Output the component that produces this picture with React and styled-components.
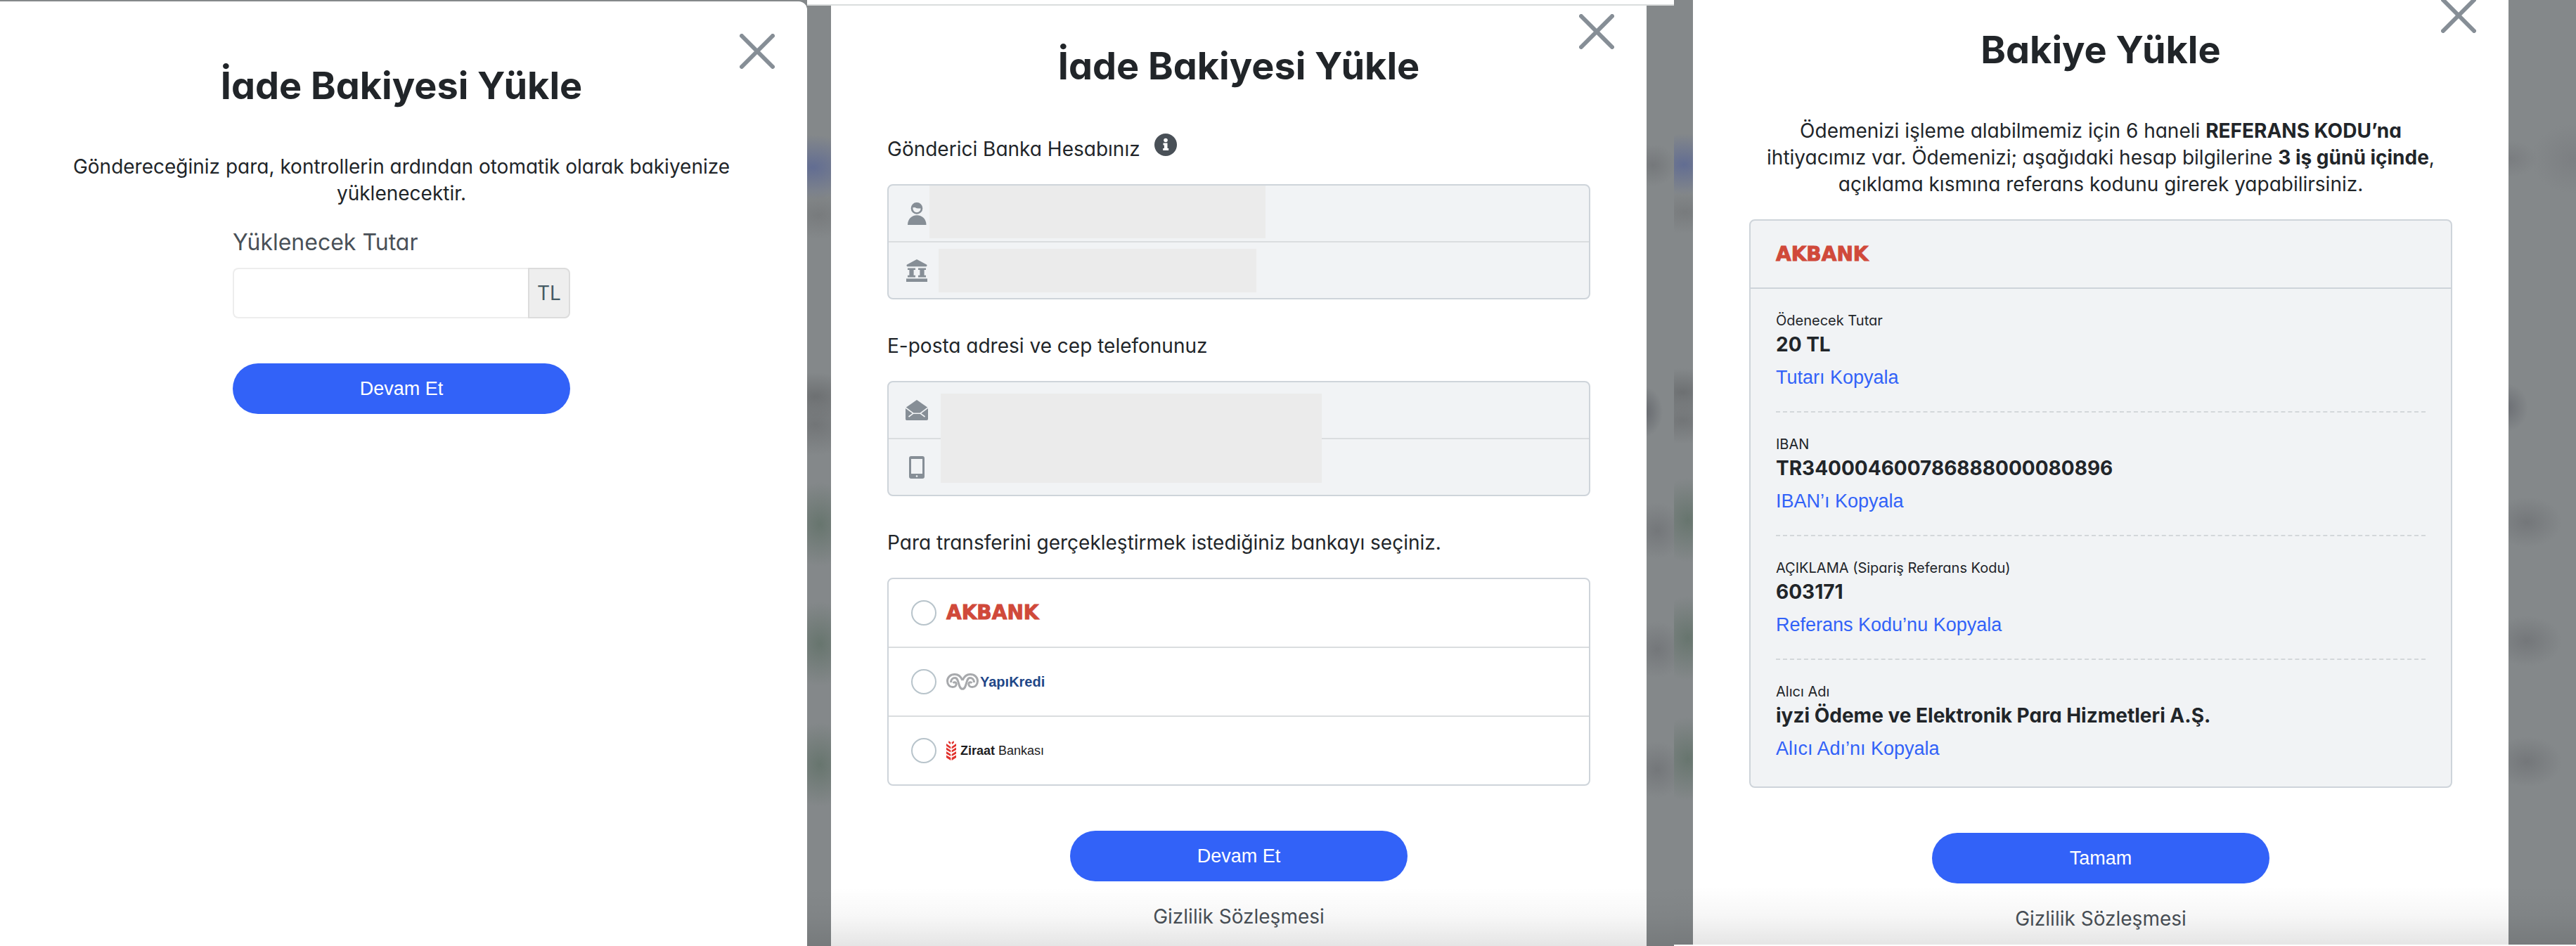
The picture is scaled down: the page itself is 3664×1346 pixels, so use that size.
import { useState } from "react"
import styled, { createGlobalStyle } from "styled-components"


const blot = (color, x, y, rx, ry) =>
    `radial-gradient(ellipse ${rx}px ${ry}px at ${x} ${y}px, ${color}, transparent)`

// blurred page behind the dialogs
const middleBackdrop = [
    blot("#626d92", "8px", 238, 70, 46),
    blot("#787b7d", "16px", 306, 50, 34),
    blot("#6d7072", "12px", 564, 60, 34),
    blot("#727577", "12px", 604, 60, 44),
    blot("#67756e", "18px", 746, 50, 60),
    blot("#67756e", "18px", 916, 50, 60),
    blot("#67756e", "18px", 1088, 50, 60),
    blot("#75787b", "calc(100% - 30px)", 235, 34, 30),
    blot("#66696e", "calc(100% - 42px)", 586, 26, 36),
    blot("#74777a", "calc(100% - 24px)", 755, 40, 40),
    blot("#74777a", "calc(100% - 24px)", 924, 40, 40),
    blot("#74777a", "calc(100% - 24px)", 1095, 40, 40),
].join(",")

const rightBackdrop = [
    blot("#626d92", "14px", 234, 60, 44),
    blot("#787b7d", "16px", 302, 50, 30),
    blot("#6d7072", "12px", 558, 60, 34),
    blot("#727577", "12px", 598, 60, 34),
    blot("#67756e", "20px", 740, 50, 60),
    blot("#67756e", "20px", 908, 50, 60),
    blot("#67756e", "20px", 1080, 50, 60),
    blot("#7a7d80", "calc(100% - 94px)", 226, 40, 26),
    blot("#7c7f82", "calc(100% - 4px)", 226, 60, 50),
    blot("#6c6f74", "calc(100% - 98px)", 580, 30, 34),
    blot("#74777a", "calc(100% - 70px)", 743, 50, 36),
    blot("#74777a", "calc(100% - 70px)", 912, 50, 36),
    blot("#74777a", "calc(100% - 70px)", 1084, 50, 36),
].join(",")


const CloseIcon = () => (
    <svg width="50" height="50" viewBox="0 0 50 50" fill="none" stroke="#868e96" strokeWidth="6" strokeLinecap="round" aria-hidden="true">
        <path d="M3 3L47 47M47 3L3 47" />
    </svg>
)

const InfoIcon = () => (
    <svg width="32" height="32" viewBox="0 0 32 32" aria-hidden="true">
        <circle cx="16" cy="16" r="16" fill="#495057" />
        <circle cx="16" cy="9.500" r="2.800" fill="#fff" />
        <path fill="#fff" d="M12.500 13.500h6v7.500h1.700v3h-8v-3h1.700v-4.500h-1.400z" />
    </svg>
)

const PersonIcon = () => (
    <svg width="32" height="32" viewBox="0 0 32 32" fill="#868e96" aria-hidden="true">
        <path fillRule="evenodd" d="M16 0a8.300 8.300 0 0 1 8.300 8.400A8.300 8.300 0 0 1 16 16.800a8.300 8.300 0 0 1-8.300-8.400A8.300 8.300 0 0 1 16 0zm-5.600 7.200c-.4 4 2.400 7 5.600 7s5.800-2.600 5.600-5.800c-4 .4-6.600-.3-8.200-1.500-.8.500-1.900.6-3 .3z" />
        <path d="M3 32c0-8 5.600-13.700 13.200-13.700S29.500 24 29.500 32z" />
    </svg>
)

const BankIcon = () => (
    <svg width="32" height="32" viewBox="0 0 32 32" fill="#868e96" aria-hidden="true">
        <path d="M16 0l14 7.600c1 .6.600 2.600-.6 2.600H2.600C1.400 10.200 1 8.200 2 7.600z" />
        <path d="M3 12.600h11v2.400h-2.400v7.800H14v2.600H3v-2.600h2.400V15H3zM18 12.600h11v2.400h-2.400v7.800H29v2.600H18v-2.600h2.400V15H18z" />
        <path d="M1 27.400h30V32H1z" />
    </svg>
)

const MailIcon = () => (
    <svg width="32" height="32" viewBox="0 0 32 32" aria-hidden="true">
        <path fill="#868e96" d="M16 1L1 11.500c-.7.500-1 1-1 2V28c0 1.400.8 2 2 2h28c1.200 0 2-.8 2-2V13.500c0-1-.3-1.500-1-2z" />
        <path fill="none" stroke="#f1f3f5" strokeWidth="1.600" d="M0 12l11 8.200h10L32 12M4.500 25l6.500-4.800M27.500 25L21 20.200" />
    </svg>
)

const PhoneIcon = () => (
    <svg width="32" height="32" viewBox="0 0 32 32" aria-hidden="true">
        <path fill="#868e96" fillRule="evenodd" d="M8 0h16a3 3 0 0 1 3 3v26a3 3 0 0 1-3 3H8a3 3 0 0 1-3-3V3a3 3 0 0 1 3-3zm0 4v21h16V4z" />
        <circle cx="16" cy="28.500" r="1.300" fill="#f1f3f5" />
    </svg>
)

const RamIcon = () => (
    <svg width="46" height="24" viewBox="0 0 46 24" fill="none" stroke="#a7a9ac" strokeWidth="3" aria-hidden="true">
        <path d="M23 10C20.500 4 17 1.500 12 1.500C5.500 1.500 1.500 5.800 1.500 11C1.500 16 5 19.600 9 19.600C12.500 19.600 14.500 17.500 14.200 14.800C13.900 12.400 11 12 9.500 13.800" />
        <path d="M6.500 13C6.500 9 9 6.500 12.500 6.500C18.500 6.500 16.500 22.300 23 22.300C29.500 22.300 27.500 6.500 33.500 6.500C37 6.500 39.500 9 39.500 13" />
        <path d="M23 10C25.500 4 29 1.500 34 1.500C40.500 1.500 44.500 5.800 44.500 11C44.500 16 41 19.600 37 19.600C33.500 19.600 31.500 17.500 31.800 14.800C32.100 12.400 35 12 36.500 13.800" />
    </svg>
)

const WheatIcon = () => (
    <svg width="14" height="28" viewBox="0 0 14 28" fill="#e1322d" aria-hidden="true">
        <path d="M3.500 0l3 2.500L5.800 5 3 2.800zM10.500 0l-3 2.500.7 2.500L11 2.800z" />
        <path d="M0 4l6.300 4.500v3L0 7.500zM14 4l-6.300 4.500v3L14 7.500z" />
        <path d="M0 9.500l6.300 4v3L0 13zM14 9.500l-6.300 4v3L14 13z" />
        <path d="M0 15l6.300 4v3L0 18.500zM14 15l-6.300 4v3l6.300-3.500z" />
        <path d="M0 20.500l6.300 3.500v4L0 24zM14 20.500l-6.300 3.500v4L14 24z" />
    </svg>
)


const AkbankLogo = () => <Akbank>AKBANK</Akbank>

const YapiKrediLogo = () => (
    <>
        <RamIcon />
        <YapiKredi>YapıKredi</YapiKredi>
    </>
)

const ZiraatLogo = () => (
    <>
        <WheatIcon />
        <Ziraat><b>Ziraat</b> Bankası</Ziraat>
    </>
)

const banks = [
    { id: "akbank", Logo: AkbankLogo },
    { id: "yapikredi", Logo: YapiKrediLogo },
    { id: "ziraat", Logo: ZiraatLogo },
]

const details = [
    { label: "Ödenecek Tutar", value: "20 TL", copy: "Tutarı Kopyala" },
    { label: "IBAN", value: "TR340004600786888000080896", copy: "IBAN’ı Kopyala" },
    { label: "AÇIKLAMA (Sipariş Referans Kodu)", value: "603171", copy: "Referans Kodu’nu Kopyala" },
    { label: "Alıcı Adı", value: "iyzi Ödeme ve Elektronik Para Hizmetleri A.Ş.", copy: "Alıcı Adı’nı Kopyala" },
]


const Close = () => (
    <CloseButton type="button" aria-label="Kapat"><CloseIcon /></CloseButton>
)

const AmountDialog = () => {
    const [amount, setAmount] = useState("")

    return (
        <Dialog $shift={2} $rounded>
            <Close />
            <Title>İade Bakiyesi Yükle</Title>
            <Lead>Göndereceğiniz para, kontrollerin ardından otomatik olarak bakiyenize yüklenecektir.</Lead>
            <AmountForm>
                <AmountLabel htmlFor="amount">Yüklenecek Tutar</AmountLabel>
                <AmountGroup>
                    <AmountInput id="amount" value={amount} onChange={(e) => setAmount(e.target.value)} />
                    <Currency>TL</Currency>
                </AmountGroup>
            </AmountForm>
            <PrimaryButton type="button">Devam Et</PrimaryButton>
        </Dialog>
    )
}

const BankDialog = () => {
    const [bank, setBank] = useState(null)

    return (
        <Dialog $shift={-34}>
            <Close />
            <Title>İade Bakiyesi Yükle</Title>
            <Column>
                <SectionTitle>Gönderici Banka Hesabınız <Hint><InfoIcon /></Hint></SectionTitle>
                <InfoBox>
                    <InfoRow><PersonIcon /><Hidden $start={2} $width={478} $height={75} $top /></InfoRow>
                    <InfoRow><BankIcon /><Hidden $start={15} $width={452} $height={62} /></InfoRow>
                </InfoBox>
                <SectionTitle>E-posta adresi ve cep telefonunuz</SectionTitle>
                <InfoBox>
                    <InfoRow><MailIcon /></InfoRow>
                    <InfoRow><PhoneIcon /></InfoRow>
                    <HiddenOver />
                </InfoBox>
                <SectionTitle>Para transferini gerçekleştirmek istediğiniz bankayı seçiniz.</SectionTitle>
                <BankList>
                    {banks.map(({ id, Logo }) => (
                        <BankOption key={id}>
                            <Radio name="bank" value={id} checked={bank === id} onChange={() => setBank(id)} />
                            <LogoBox><Logo /></LogoBox>
                        </BankOption>
                    ))}
                </BankList>
            </Column>
            <PrimaryButton type="button">Devam Et</PrimaryButton>
            <PrivacyLink href="#gizlilik">Gizlilik Sözleşmesi</PrivacyLink>
        </Dialog>
    )
}

const TransferDialog = () => (
    <Dialog $shift={-49}>
        <Close />
        <Title>Bakiye Yükle</Title>
        <Lead>
            Ödemenizi işleme alabilmemiz için 6 haneli <b>REFERANS KODU’na</b> ihtiyacımız var. Ödemenizi; aşağıdaki hesap bilgilerine <b>3 iş günü içinde</b>, açıklama kısmına referans kodunu girerek yapabilirsiniz.
        </Lead>
        <Card>
            <CardHeader><AkbankLogo /></CardHeader>
            <CardBody>
                {details.map((item) => (
                    <Detail key={item.label}>
                        <DetailLabel>{item.label}</DetailLabel>
                        <DetailValue>{item.value}</DetailValue>
                        <CopyButton type="button" onClick={() => navigator.clipboard?.writeText(item.value)}>{item.copy}</CopyButton>
                    </Detail>
                ))}
            </CardBody>
        </Card>
        <PrimaryButton type="button">Tamam</PrimaryButton>
        <PrivacyLink href="#gizlilik">Gizlilik Sözleşmesi</PrivacyLink>
    </Dialog>
)

const App = () => {
    return (
        <Page>
            <GlobalStyle />
            <Frame>
                <AmountDialog />
            </Frame>
            <Frame $backdrop={middleBackdrop} $left={34} $right={39} $faded>
                <BrowserEdge />
                <BankDialog />
            </Frame>
            <Frame $backdrop={rightBackdrop} $left={27} $right={96} $bottom={2} $faded>
                <TransferDialog />
            </Frame>
        </Page>
    )
}

export default App


const GlobalStyle = createGlobalStyle`
  * {
    box-sizing: border-box;
  }
  body {
    margin: 0;
    background: #fff;
    color: #212529;
    font-family: Inter, "Open Sans", sans-serif;
    font-feature-settings: "cv11";
    font-size: 28px;
    line-height: 36px;
  }
`

const Page = styled.main`
  display: grid;
  grid-template-columns: 1148fr 1233fr 1283fr;
  min-height: 100vh;
`

const Frame = styled.section`
  position: relative;
  display: flex;
  flex-direction: column;
  overflow: hidden;
  margin-bottom: ${({ $bottom = 0 }) => $bottom}px;
  padding: 0 ${({ $right = 0 }) => $right}px 0 ${({ $left = 0 }) => $left}px;
  background-color: #84888a;
  background-image: ${({ $backdrop = "none" }) => $backdrop};

  &::after {
    content: "";
    display: ${({ $faded }) => ($faded ? "block" : "none")};
    position: absolute;
    inset: auto 0 0 0;
    height: 84px;
    background: linear-gradient(transparent, rgba(0, 0, 0, 0.03) 50%, rgba(0, 0, 0, 0.1));
    pointer-events: none;
  }
`

const BrowserEdge = styled.div`
  position: relative;
  z-index: 1;
  flex: none;
  height: 8px;
  margin: 0 -39px 0 -34px;
  border-bottom: 2px solid #dadddd;
  background: #fff;
`

const Dialog = styled.div`
  position: relative;
  display: flex;
  flex-direction: column;
  align-items: center;
  flex: 1;
  margin-top: ${({ $shift }) => $shift}px;
  padding: 86px ${({ $rounded }) => ($rounded ? 86 : 80)}px 4px 80px;
  background: #fff;
  border-top-right-radius: ${({ $rounded }) => ($rounded ? "12px" : "0")};
`

const CloseButton = styled.button`
  position: absolute;
  top: 46px;
  right: 46px;
  display: flex;
  padding: 0;
  border: 0;
  background: none;
  cursor: pointer;
`

const Title = styled.h1`
  margin: 0 0 62px;
  font-size: 54px;
  font-weight: 700;
  line-height: 68px;
`

const Lead = styled.p`
  max-width: 1000px;
  margin: 0 0 31px;
  line-height: 38px;
  text-align: center;
`

const AmountForm = styled.div`
  display: flex;
  flex-direction: column;
  gap: 16px;
  width: 480px;
`

const AmountLabel = styled.label`
  color: #495057;
  font-size: 32px;
  line-height: 40px;
`

const AmountGroup = styled.div`
  display: flex;
  height: 72px;
`

const AmountInput = styled.input`
  flex: 1;
  min-width: 0;
  padding: 0 20px;
  border: 2px solid #ededed;
  border-right: 0;
  border-radius: 8px 0 0 8px;
  background: #fff;
  font: inherit;
`

const Currency = styled.span`
  display: flex;
  align-items: center;
  justify-content: center;
  width: 60px;
  border: 2px solid #dcdcdc;
  border-radius: 0 8px 8px 0;
  background: #eee;
  color: #455a64;
`

const PrimaryButton = styled.button`
  flex: none;
  width: 480px;
  height: 72px;
  margin-top: 64px;
  border: 0;
  border-radius: 36px;
  background: #3262f8;
  color: #fff;
  font-family: "Liberation Sans", Arial, sans-serif;
  font-size: 27px;
  cursor: pointer;
`

const PrivacyLink = styled.a`
  margin-top: 32px;
  color: #495057;
  text-decoration: none;
`

const Column = styled.div`
  width: 100%;
  max-width: 1000px;
  margin-top: 4px;
`

const SectionTitle = styled.h2`
  display: flex;
  align-items: flex-end;
  gap: 20px;
  height: 36px;
  margin: 48px 0 32px;
  font-size: 28px;
  font-weight: 400;

  &:first-child {
    margin-top: 0;
  }
`

const Hint = styled.span`
  display: flex;
  padding-bottom: 8px;
`

const InfoBox = styled.div`
  position: relative;
  border: 2px solid #ced4da;
  border-radius: 8px;
  background: #f1f3f5;
`

const InfoRow = styled.div`
  display: flex;
  align-items: center;
  height: 79px;
  padding-left: 24px;

  & + & {
    height: 81px;
    border-top: 2px solid #dadddf;
  }
`

const Hidden = styled.span`
  align-self: ${({ $top }) => ($top ? "flex-start" : "center")};
  width: ${({ $width }) => $width}px;
  height: ${({ $height }) => $height}px;
  margin-left: ${({ $start }) => $start}px;
  background: #ebebeb;
`

// covers both rows of the box
const HiddenOver = styled.span`
  position: absolute;
  top: 16px;
  left: 74px;
  width: 542px;
  height: 127px;
  background: #ebebeb;
`

const BankList = styled.div`
  border: 2px solid #ced4da;
  border-radius: 8px;
`

const BankOption = styled.label`
  display: flex;
  align-items: center;
  gap: 14px;
  height: 96px;
  padding-left: 32px;
  cursor: pointer;

  & + & {
    height: 98px;
    border-top: 2px solid #dadddf;
  }
`

const Radio = styled.input.attrs({ type: "radio" })`
  appearance: none;
  width: 36px;
  height: 36px;
  margin: 0;
  border: 2px solid #b8c4cb;
  border-radius: 50%;
  background: #fff;

  &:checked {
    border: 10px solid #3262f8;
  }
`

const LogoBox = styled.span`
  display: flex;
  align-items: center;
`

const Akbank = styled.span`
  color: #d0493a;
  font-family: "DejaVu Sans", sans-serif;
  font-size: 28px;
  font-weight: 700;
  -webkit-text-stroke: 1px #d0493a;
`

const YapiKredi = styled.span`
  margin-left: 2px;
  color: #1f4788;
  font-family: "Liberation Sans Narrow", "Liberation Sans", sans-serif;
  font-size: 20px;
  font-weight: 700;
`

const Ziraat = styled.span`
  margin-left: 6px;
  color: #1d1d1f;
  font-family: "Liberation Sans Narrow", "Liberation Sans", sans-serif;
  font-size: 18px;
`

const Card = styled.section`
  width: 100%;
  max-width: 1000px;
  border: 2px solid #ced4da;
  border-radius: 8px;
  background: #f1f3f5;
`

const CardHeader = styled.header`
  display: flex;
  align-items: center;
  height: 97px;
  padding: 0 36px;
  border-bottom: 2px solid #ced4da;
`

const CardBody = styled.div`
  padding: 0 36px 6px;
`

const Detail = styled.div`
  display: flex;
  flex-direction: column;
  align-items: flex-start;
  padding: 30px 0;

  & + & {
    border-top: 2px dashed #d3d7da;
  }
`

const DetailLabel = styled.span`
  font-size: 20px;
  line-height: 30px;
`

const DetailValue = styled.strong`
  font-weight: 700;
  line-height: 38px;
`

const CopyButton = styled.button`
  margin-top: 10px;
  padding: 0;
  border: 0;
  background: none;
  color: #3262f8;
  font-family: "Liberation Sans", Arial, sans-serif;
  font-size: 27px;
  line-height: 36px;
  cursor: pointer;
`
